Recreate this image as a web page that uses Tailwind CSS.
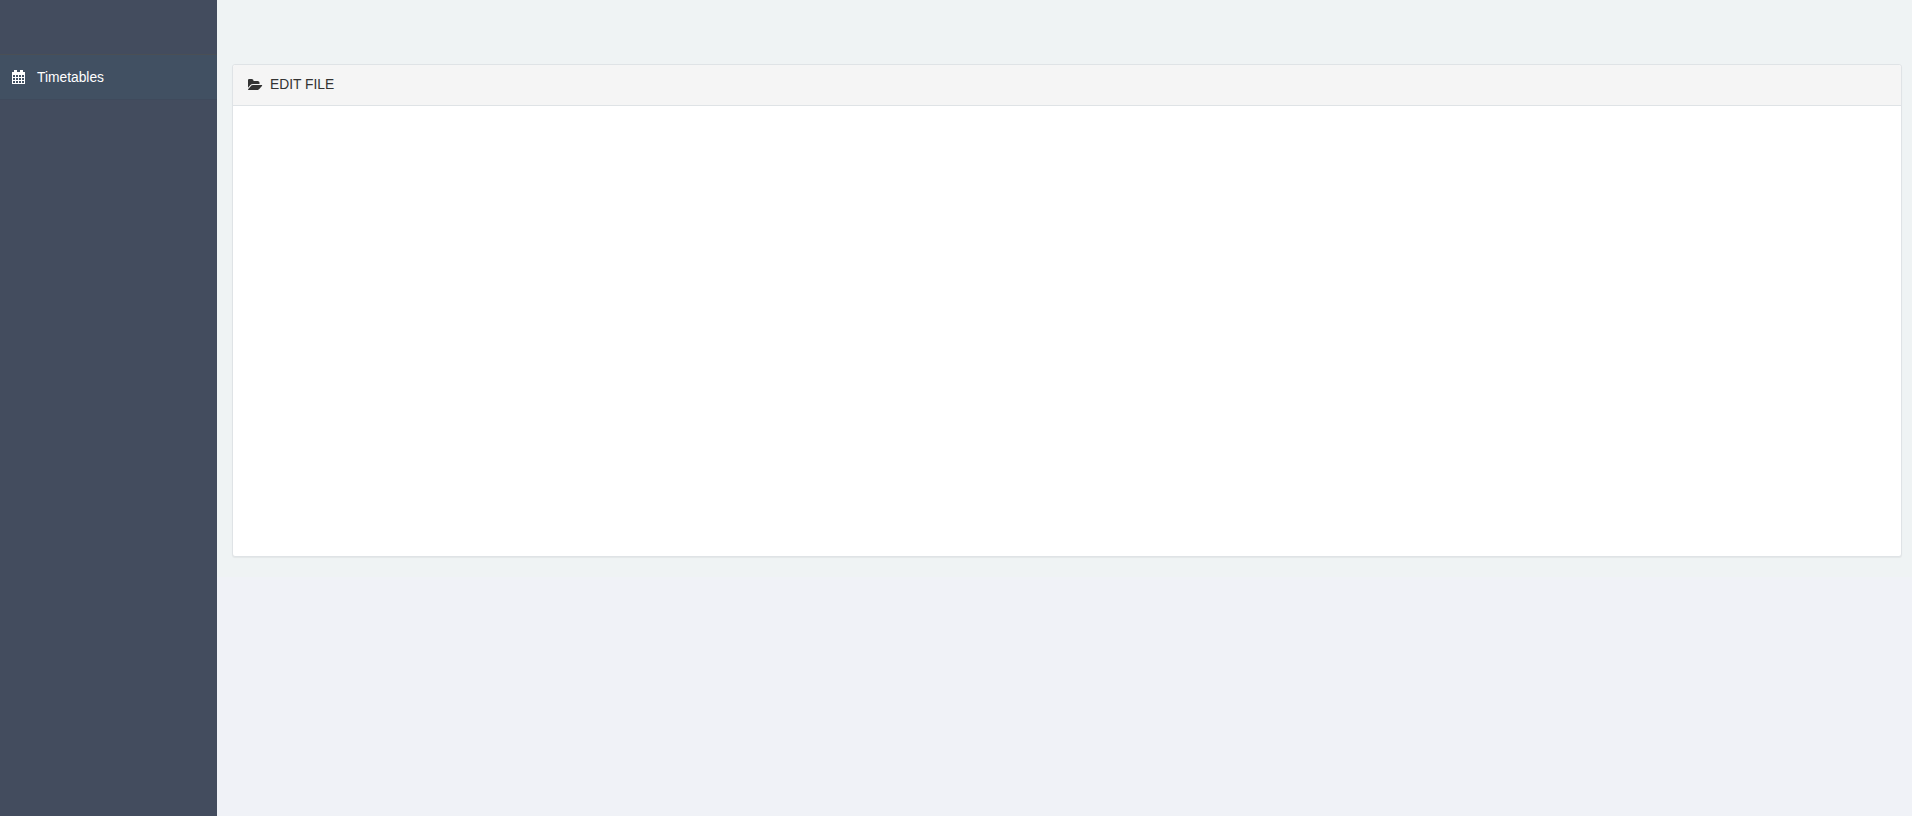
<!DOCTYPE html>
<html lang="en">

<head>
    <meta charset="UTF-8">
    <meta name="viewport" content="width=device-width, initial-scale=1.0">
    <title>Edit file</title>
    <script src="https://cdn.jsdelivr.net/npm/@tailwindcss/browser@4"></script>
</head>

<body class="h-[816px] overflow-hidden bg-[#f0f2f7] font-['Liberation_Sans',Arial,sans-serif] text-[13.8px] text-[#333]">
    <div class="flex h-full">
        <!-- Sidebar -->
        <aside class="w-[217px] shrink-0 bg-[#434c5e] pt-[54px]">
            <a href="#" class="flex h-[46px] items-center border-t border-b border-t-[#4a4f55] border-b-[#3f4a5c] bg-[#415062] pl-[12px] text-[#fff]">
                <svg class="h-[14px] w-[13px]" viewBox="0 0 13 14" fill="#fff" shape-rendering="crispEdges">
                    <path fill-rule="evenodd" d="M2 0h3v2h3V0h3v2h2v12H0V2h2V0zM1 5v2h2V5H1zM4 5v2h2V5H4zM7 5v2h2V5H7zM10 5v2h2V5h-2zM1 8v2h2V8H1zM4 8v2h2V8H4zM7 8v2h2V8H7zM10 8v2h2V8h-2zM1 11v2h2v-2H1zM4 11v2h2v-2H4zM7 11v2h2v-2H7zM10 11v2h2v-2h-2z" />
                </svg>
                <span class="ml-[12px] pt-[2px]">Timetables</span>
            </a>
        </aside>

        <!-- Main -->
        <main class="flex-1">
            <div class="h-[577px] bg-[#eff3f4] pt-[64px] pr-[10px] pl-[15px]">
                <div class="h-[493px] rounded-[3px] border border-[#dfe3e6] bg-white shadow-[0_1px_1px_rgba(0,0,0,0.05)]">
                    <div class="flex h-[41px] items-center rounded-t-[3px] border-b border-[#dfe3e6] bg-[#f5f5f5] pl-[15px]">
                        <svg class="h-[14px] w-[15px]" viewBox="0 0 1920 1792" fill="#333">
                            <path d="M1815 952q0 31-31 66l-336 396q-43 51-120.5 86.5t-143.5 35.5h-1088q-34 0-60.5-13t-26.5-43q0-31 31-66l336-396q43-51 120.5-86.5t143.5-35.5h1088q34 0 60.5 13t26.5 43zm-343-344v160h-832q-94 0-197 47.5t-164 119.5l-337 396-5 6q0-4-.5-12.5t-.5-12.5v-960q0-92 66-158t158-66h320q92 0 158 66t66 158v32h544q92 0 158 66t66 158z" />
                        </svg>
                        <span class="ml-[7px] pt-[1px]">EDIT FILE</span>
                    </div>
                </div>
            </div>
        </main>
    </div>
</body>

</html>
